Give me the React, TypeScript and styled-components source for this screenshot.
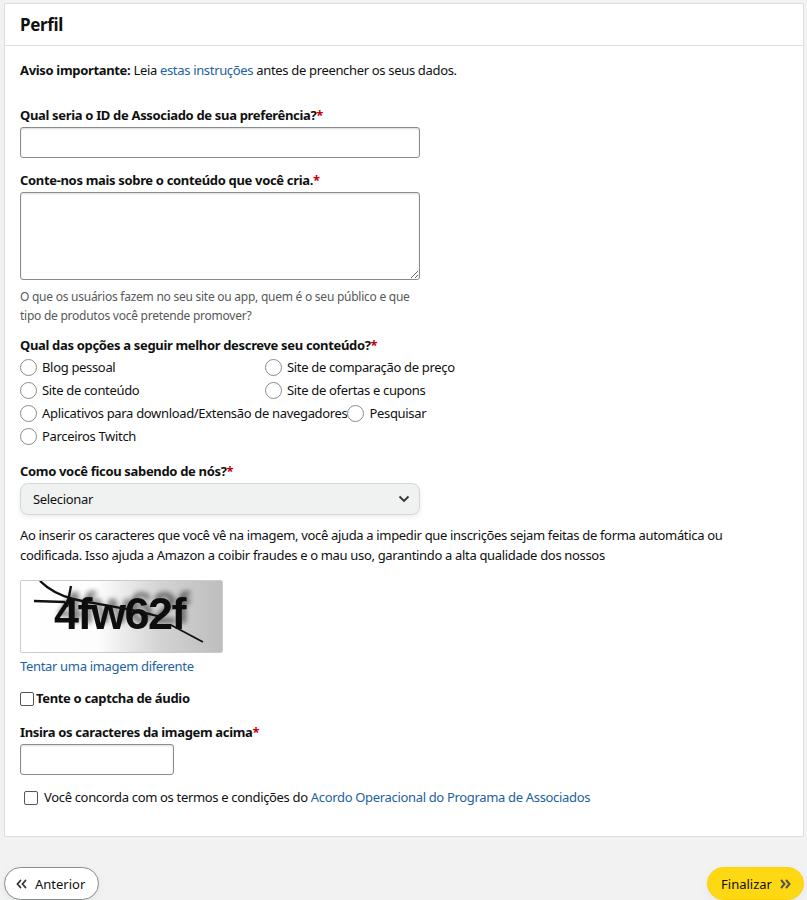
import styled, { createGlobalStyle } from 'styled-components';

const GlobalStyle = createGlobalStyle`
  body {
    margin: 0;
    background: #f2f2f2;
    font-family: "Noto Sans", "Liberation Sans", sans-serif;
    letter-spacing: -0.33px;
    color: #0f1111;
  }
`;

const Page = styled.div`
  padding: 3px 3px 0 4px;
`;

const Card = styled.div`
  background: #fff;
  border: 1px solid #dddddd;
  border-radius: 2px;
`;

const CardHeader = styled.div`
  padding: 10px 15px 9px;
  border-bottom: 1px solid #dddddd;
  font-size: 17px;
  font-weight: 700;
  line-height: 22px;
`;

const CardBody = styled.div`
  padding: 15px 15px 29px;
  font-size: 13px;
  line-height: 19px;
`;

const Notice = styled.p`
  margin: 0 0 26px;
`;

const Link = styled.a`
  color: #2162a1;
  text-decoration: none;
`;

const Field = styled.div<{ $gap?: number }>`
  margin-bottom: ${(p) => p.$gap ?? 13}px;
`;

const Label = styled.div`
  font-weight: 700;
  margin-bottom: 2px;
`;

const Star = styled.span`
  color: #c40000;
`;

const TextInput = styled.input<{ $width?: number }>`
  display: block;
  box-sizing: border-box;
  width: ${(p) => p.$width ?? 400}px;
  height: 31px;
  border: 1px solid #888c8c;
  border-radius: 3px;
  box-shadow: 0 1px 2px rgba(15, 17, 17, 0.15) inset;
  font: inherit;
`;

const TextArea = styled.textarea`
  display: block;
  box-sizing: border-box;
  width: 400px;
  height: 88px;
  border: 1px solid #888c8c;
  border-radius: 3px;
  box-shadow: 0 1px 2px rgba(15, 17, 17, 0.15) inset;
  font: inherit;
  margin: 0;
`;

const Hint = styled.div`
  color: #565959;
  width: 400px;
  margin-top: 7px;
  font-size: 12px;
  letter-spacing: -0.25px;
`;

const RadioGroup = styled.div`
  display: flex;
  flex-wrap: wrap;
  width: 600px;
  row-gap: 3px;
`;

const RadioRow = styled.label`
  display: flex;
  flex: 0 0 auto;
  min-width: 245px;
  align-items: center;
  gap: 5px;
  white-space: nowrap;
  height: 20px;
`;

const RadioCircle = styled.span`
  width: 15px;
  height: 15px;
  border: 1px solid #888c8c;
  border-radius: 50%;
  flex-shrink: 0;
  background: #fff;
`;

const Select = styled.div`
  box-sizing: border-box;
  width: 400px;
  height: 32px;
  display: flex;
  align-items: center;
  justify-content: space-between;
  padding: 0 9px 0 12px;
  background: #f0f2f2;
  border: 1px solid #d5d9d9;
  border-radius: 8px;
  box-shadow: 0 2px 5px rgba(15, 17, 17, 0.08);
`;

const Paragraph = styled.p`
  margin: 0 0 15px;
  max-width: 755px;
  line-height: 20px;
`;

const CaptchaBox = styled.div`
  width: 201px;
  height: 71px;
  border: 1px solid #cccccc;
  border-radius: 2px;
  overflow: hidden;
`;

const CaptchaLink = styled(Link)`
  display: block;
  margin: 4px 0 13px;
`;

const CheckRow = styled.label<{ $indent?: number; $bold?: boolean }>`
  display: flex;
  align-items: center;
  gap: ${(p) => (p.$bold ? 2 : 6)}px;
  padding-left: ${(p) => p.$indent ?? 0}px;
  font-weight: ${(p) => (p.$bold ? 700 : 400)};
  white-space: pre;
`;

const CheckBox = styled.span`
  width: 12px;
  height: 12px;
  border: 1px solid #555;
  border-radius: 2px;
  background: #fff;
`;

const Footer = styled.div`
  display: flex;
  justify-content: space-between;
  padding: 30px 0 0 0;
`;

const NavButton = styled.button<{ $primary?: boolean }>`
  display: flex;
  align-items: center;
  gap: 7px;
  height: 33px;
  padding: 0 ${(p) => (p.$primary ? 11 : 13)}px 0 ${(p) => (p.$primary ? 13 : 11)}px;
  border-radius: 17px;
  border: 1px solid ${(p) => (p.$primary ? '#fcd200' : '#888c8c')};
  background: ${(p) => (p.$primary ? '#ffd814' : '#fff')};
  font: inherit;
  font-size: 13px;
  color: #0f1111;
  box-shadow: 0 2px 5px rgba(213, 217, 217, 0.5);
`;

const ChevronLeft = () => (
  <svg width="12" height="12" viewBox="0 0 12 12">
    <path d="M4.5 2.5 L1.5 6 L4.5 9.5 M9.5 2.5 L6.5 6 L9.5 9.5" fill="none" stroke="#333" strokeWidth="1.8" strokeLinecap="round" />
  </svg>
);

const ChevronRight = () => (
  <svg width="13" height="12" viewBox="0 0 13 12">
    <path d="M2.5 2.5 L5.5 6 L2.5 9.5 M7.5 2.5 L10.5 6 L7.5 9.5" fill="none" stroke="#555" strokeWidth="2" strokeLinecap="round" />
  </svg>
);

const Captcha = () => (
  <svg width="201" height="71" viewBox="0 0 201 71">
    <defs>
      <linearGradient id="cg" x1="0" x2="1" y1="0" y2="0">
        <stop offset="0" stopColor="#fff" />
        <stop offset="0.38" stopColor="#fdfdfd" />
        <stop offset="0.7" stopColor="#d2d2d2" />
        <stop offset="1" stopColor="#bebebe" />
      </linearGradient>
      <filter id="ghost" x="-20%" y="-40%" width="140%" height="180%">
        <feOffset in="SourceAlpha" dx="4" dy="-6" result="off" />
        <feGaussianBlur in="off" stdDeviation="2.5" result="blur" />
        <feComponentTransfer in="blur" result="soft">
          <feFuncA type="linear" slope="0.5" />
        </feComponentTransfer>
        <feMerge>
          <feMergeNode in="soft" />
          <feMergeNode in="SourceGraphic" />
        </feMerge>
      </filter>
    </defs>
    <rect width="201" height="71" fill="url(#cg)" />
    <text x="33" y="48" fontFamily="'Liberation Sans', sans-serif" fontWeight="700" fontSize="45" letterSpacing="-1.5" fill="#0a0a0a" filter="url(#ghost)">
      4fw62f
    </text>
    <path d="M19 0 C27 8 37 14 52 18 S 105 26 140 36" stroke="#111" strokeWidth="2.4" fill="none" />
    <path d="M13 20 L44 21" stroke="#111" strokeWidth="2.4" fill="none" />
    <path d="M50 5 L46 26" stroke="#111" strokeWidth="2.4" fill="none" />
    <path d="M150 44 L182 61" stroke="#111" strokeWidth="1.8" fill="none" />
  </svg>
);

const options = [
  'Blog pessoal',
  'Site de comparação de preço',
  'Site de conteúdo',
  'Site de ofertas e cupons',
  'Aplicativos para download/Extensão de navegadores',
  'Pesquisar',
  'Parceiros Twitch',
];

const App = () => {
  return (
    <>
      <GlobalStyle />
      <Page>
        <Card>
          <CardHeader>Perfil</CardHeader>
          <CardBody>
            <Notice>
              <b>Aviso importante:</b> Leia <Link href="#">estas instruções</Link> antes de preencher os seus dados.
            </Notice>

            <Field>
              <Label>
                Qual seria o ID de Associado de sua preferência?<Star>*</Star>
              </Label>
              <TextInput />
            </Field>

            <Field $gap={11}>
              <Label>
                Conte-nos mais sobre o conteúdo que você cria.<Star>*</Star>
              </Label>
              <TextArea />
              <Hint>
                O que os usuários fazem no seu site ou app, quem é o seu público e que tipo de produtos você pretende promover?
              </Hint>
            </Field>

            <Field $gap={16}>
              <Label>
                Qual das opções a seguir melhor descreve seu conteúdo?<Star>*</Star>
              </Label>
              <RadioGroup>
                {options.map((o) => (
                  <RadioRow key={o}>
                    <RadioCircle />
                    {o}
                  </RadioRow>
                ))}
              </RadioGroup>
            </Field>

            <Field $gap={10}>
              <Label>
                Como você ficou sabendo de nós?<Star>*</Star>
              </Label>
              <Select>
                Selecionar
                <svg width="12" height="8" viewBox="0 0 12 8">
                  <path d="M1.5 1.5 L6 6 L10.5 1.5" fill="none" stroke="#333" strokeWidth="1.8" />
                </svg>
              </Select>
            </Field>

            <Paragraph>
              Ao inserir os caracteres que você vê na imagem, você ajuda a impedir que inscrições sejam feitas de forma automática ou codificada. Isso ajuda a Amazon a coibir fraudes e o mau uso, garantindo a alta qualidade dos nossos
            </Paragraph>

            <CaptchaBox>
              <Captcha />
            </CaptchaBox>
            <CaptchaLink href="#">Tentar uma imagem diferente</CaptchaLink>

            <Field $gap={15}>
              <CheckRow $bold>
                <CheckBox />
                Tente o captcha de áudio
              </CheckRow>
            </Field>

            <Field>
              <Label>
                Insira os caracteres da imagem acima<Star>*</Star>
              </Label>
              <TextInput $width={154} />
            </Field>

            <CheckRow $indent={4}>
              <CheckBox />
              <span>
                Você concorda com os termos e condições do <Link href="#">Acordo Operacional do Programa de Associados</Link>
              </span>
            </CheckRow>
          </CardBody>
        </Card>
        <Footer>
          <NavButton>
            <ChevronLeft />
            Anterior
          </NavButton>
          <NavButton $primary>
            Finalizar
            <ChevronRight />
          </NavButton>
        </Footer>
      </Page>
    </>
  );
};

export default App;
